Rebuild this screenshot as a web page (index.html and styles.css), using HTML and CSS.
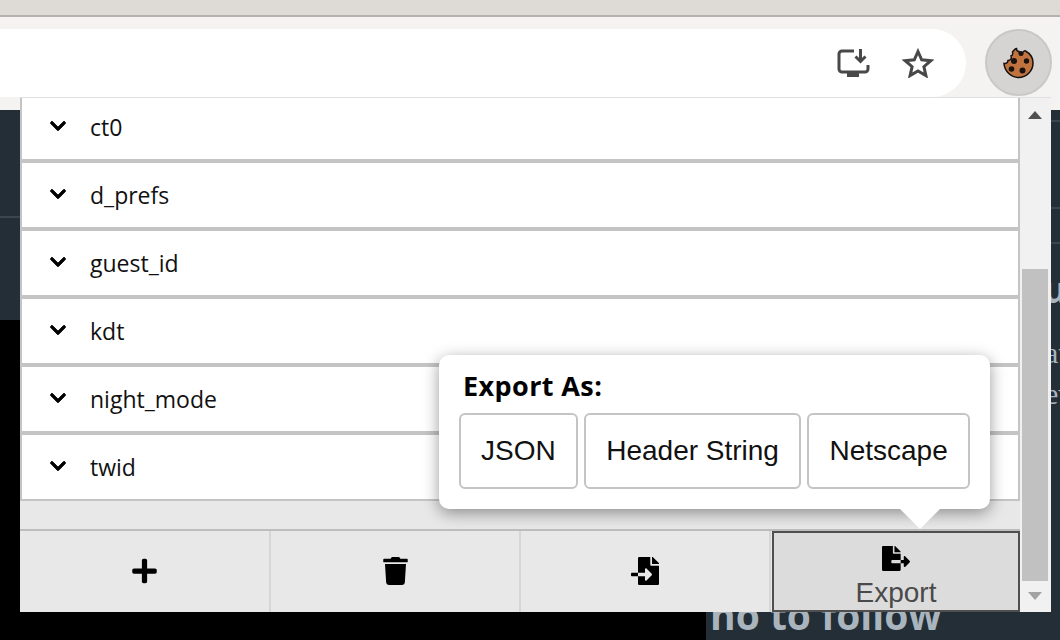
FILE: index.html
```html
<!DOCTYPE html>
<html lang="en">
<head>
    <meta charset="UTF-8">
    <meta name="viewport" content="width=device-width, initial-scale=1.0">
    <title>Cookie Editor</title>
    <link rel="stylesheet" href="styles.css">
</head>
<body>

<div class="tabstrip"></div>

<div class="toolbar">
    <div class="omnibox">
        <svg class="omni-icon" width="34" height="30" viewBox="0 0 34 30">
            <path d="M18 3H6a3 3 0 0 0-3 3v15a3 3 0 0 0 3 3h23a3 3 0 0 0 3-3v-4" fill="none" stroke="#484848" stroke-width="3"/>
            <rect x="11" y="24" width="12" height="5" fill="#484848"/>
            <path d="M24.5 1v11M19.5 8.500l5 5 5-5" fill="none" stroke="#484848" stroke-width="3"/>
        </svg>
        <svg class="omni-icon" width="32" height="30" viewBox="0 0 32 30">
            <path d="M16 3.500l3.700 8.300 9.100.9-6.900 6 2 8.900-7.900-4.700-7.900 4.700 2-8.900-6.900-6 9.100-.9z" fill="none" stroke="#484848" stroke-width="3" stroke-linejoin="miter"/>
        </svg>
    </div>
    <div class="ext-button">
        <svg width="34" height="34" viewBox="1.500 0 34 34">
            <path d="M16 2.500c0 2 1 3 2.500 3 0 2 2 3 3.500 1.500 .5-1.500 2-2.500 3-2 4.500 2.500 7.500 7 7.500 12 0 8-6.500 14.500-14.500 14.500-7 0-14-6-14.500-14 2 .5 4-1 4-3 2.500 0 4-2 3-4.500 1.500-.5 2-2 1.500-4 1.500-1.500 2.500-3.500 4-3.500z" fill="#c1733f" stroke="#111" stroke-width="1.500"/>
            <circle cx="20.500" cy="7.500" r="2.500" fill="#1a1210"/>
            <circle cx="13.500" cy="15" r="3" fill="#1a1210"/>
            <circle cx="26" cy="15" r="2.700" fill="#1a1210"/>
            <circle cx="11" cy="23" r="2.800" fill="#1a1210"/>
            <circle cx="22" cy="24.500" r="3" fill="#1a1210"/>
        </svg>
    </div>
</div>

<div class="page">
    <div class="page-left">
        <div class="left-top"></div>
    </div>
    <div class="page-right">
        <div class="right-line first"></div>
        <div class="right-line second"></div>
        <div class="right-line third"></div>
        <div class="right-big">u</div>
        <div class="right-small">at</div>
        <div class="right-small">ev</div>
        <div class="right-title">no to follow</div>
    </div>
</div>

<div class="popup">
    <div class="popup-main">
        <div class="cookie-list">
            <div class="cookie-row"><svg class="chevron" viewBox="0 0 448 512"><path d="M207.029 381.476L12.686 187.132c-9.373-9.373-9.373-24.569 0-33.941l22.667-22.667c9.357-9.357 24.522-9.375 33.901-.04L224 284.505l154.745-154.021c9.379-9.335 24.544-9.317 33.901.04l22.667 22.667c9.373 9.373 9.373 24.569 0 33.941L240.971 381.476c-9.373 9.372-24.569 9.372-33.942 0z"/></svg><span>ct0</span></div>
            <div class="cookie-row"><svg class="chevron" viewBox="0 0 448 512"><path d="M207.029 381.476L12.686 187.132c-9.373-9.373-9.373-24.569 0-33.941l22.667-22.667c9.357-9.357 24.522-9.375 33.901-.04L224 284.505l154.745-154.021c9.379-9.335 24.544-9.317 33.901.04l22.667 22.667c9.373 9.373 9.373 24.569 0 33.941L240.971 381.476c-9.373 9.372-24.569 9.372-33.942 0z"/></svg><span>d_prefs</span></div>
            <div class="cookie-row"><svg class="chevron" viewBox="0 0 448 512"><path d="M207.029 381.476L12.686 187.132c-9.373-9.373-9.373-24.569 0-33.941l22.667-22.667c9.357-9.357 24.522-9.375 33.901-.04L224 284.505l154.745-154.021c9.379-9.335 24.544-9.317 33.901.04l22.667 22.667c9.373 9.373 9.373 24.569 0 33.941L240.971 381.476c-9.373 9.372-24.569 9.372-33.942 0z"/></svg><span>guest_id</span></div>
            <div class="cookie-row"><svg class="chevron" viewBox="0 0 448 512"><path d="M207.029 381.476L12.686 187.132c-9.373-9.373-9.373-24.569 0-33.941l22.667-22.667c9.357-9.357 24.522-9.375 33.901-.04L224 284.505l154.745-154.021c9.379-9.335 24.544-9.317 33.901.04l22.667 22.667c9.373 9.373 9.373 24.569 0 33.941L240.971 381.476c-9.373 9.372-24.569 9.372-33.942 0z"/></svg><span>kdt</span></div>
            <div class="cookie-row"><svg class="chevron" viewBox="0 0 448 512"><path d="M207.029 381.476L12.686 187.132c-9.373-9.373-9.373-24.569 0-33.941l22.667-22.667c9.357-9.357 24.522-9.375 33.901-.04L224 284.505l154.745-154.021c9.379-9.335 24.544-9.317 33.901.04l22.667 22.667c9.373 9.373 9.373 24.569 0 33.941L240.971 381.476c-9.373 9.372-24.569 9.372-33.942 0z"/></svg><span>night_mode</span></div>
            <div class="cookie-row"><svg class="chevron" viewBox="0 0 448 512"><path d="M207.029 381.476L12.686 187.132c-9.373-9.373-9.373-24.569 0-33.941l22.667-22.667c9.357-9.357 24.522-9.375 33.901-.04L224 284.505l154.745-154.021c9.379-9.335 24.544-9.317 33.901.04l22.667 22.667c9.373 9.373 9.373 24.569 0 33.941L240.971 381.476c-9.373 9.372-24.569 9.372-33.942 0z"/></svg><span>twid</span></div>
        </div>
        <div class="actions">
            <div class="action">
                <svg width="25" height="28" viewBox="0 0 448 512"><path d="M416 208H272V64c0-17.670-14.330-32-32-32h-32c-17.670 0-32 14.330-32 32v144H32c-17.670 0-32 14.330-32 32v32c0 17.670 14.330 32 32 32h144v144c0 17.670 14.330 32 32 32h32c17.670 0 32-14.330 32-32V304h144c17.670 0 32-14.330 32-32v-32c0-17.670-14.330-32-32-32z"/></svg>
            </div>
            <div class="action">
                <svg width="25" height="28" viewBox="0 0 448 512"><path d="M432 32H312l-9.400-18.700A24 24 0 0 0 281.100 0H166.800a23.720 23.720 0 0 0-21.400 13.300L136 32H16A16 16 0 0 0 0 48v32a16 16 0 0 0 16 16h416a16 16 0 0 0 16-16V48a16 16 0 0 0-16-16zM53.200 467a48 48 0 0 0 47.900 45h245.800a48 48 0 0 0 47.900-45L416 128H32z"/></svg>
            </div>
            <div class="action">
                <svg width="28" height="28" viewBox="0 0 512 512"><path d="M16 288c-8.800 0-16 7.200-16 16v32c0 8.800 7.200 16 16 16h112v-64zm489-183L407.100 7c-4.500-4.500-10.600-7-17-7H384v128h128v-6.100c0-6.300-2.500-12.400-7-16.900zm-153 31V0H152c-13.300 0-24 10.700-24 24v264h128v-65.200c0-14.300 17.300-21.400 27.400-11.300L379 308c6.600 6.700 6.600 17.400 0 24l-95.700 96.400c-10.100 10.100-27.400 3-27.400-11.300V352H128v136c0 13.300 10.700 24 24 24h336c13.300 0 24-10.700 24-24V160H376c-13.200 0-24-10.800-24-24z"/></svg>
            </div>
            <div class="action active">
                <svg width="28" height="25" viewBox="0 0 576 512"><path d="M384 121.900c0-6.300-2.500-12.400-7-16.900L279.100 7c-4.500-4.500-10.600-7-17-7H256v128h128zM571 308l-95.700-96.400c-10.100-10.100-27.400-3-27.400 11.300V288h-64v64h64v65.200c0 14.300 17.300 21.400 27.400 11.300L571 332c6.600-6.700 6.600-17.400 0-24zm-379 28v-32c0-8.800 7.200-16 16-16h176V160H248c-13.200 0-24-10.800-24-24V0H24C10.700 0 0 10.700 0 24v464c0 13.300 10.700 24 24 24h336c13.300 0 24-10.700 24-24V352H208c-8.800 0-16-7.200-16-16z"/></svg>
                <span class="action-label">Export</span>
            </div>
        </div>
    </div>
    <div class="scrollbar">
        <div class="arrow-up"></div>
        <div class="thumb"></div>
        <div class="arrow-down"></div>
    </div>
    <div class="export-menu">
        <div class="export-title">Export As:</div>
        <div class="export-options">
            <div class="export-option">JSON</div>
            <div class="export-option">Header String</div>
            <div class="export-option">Netscape</div>
        </div>
    </div>
</div>

</body>
</html>
```

FILE: styles.css
```css
html, body {
    height: 640px;
}

body {
    margin: 0;
    background-color: #000;
    overflow: hidden;
    position: relative;
    font-family: "Open Sans", sans-serif;
}

.tabstrip {
    height: 15px;
    background-color: #dedad6;
    border-bottom: 2px solid #b5b2ae;
}

.toolbar {
    height: 93px;
    display: flex;
    background-color: #f5f3f1;
    padding-top: 12px;
    box-sizing: border-box;
}

.omnibox {
    width: 966px;
    height: 68px;
    background-color: #fff;
    border-radius: 0 34px 34px 0;
    display: flex;
    align-items: center;
    justify-content: flex-end;
    gap: 32px;
    padding-right: 32px;
    box-sizing: border-box;
}

.ext-button {
    width: 67px;
    height: 67px;
    margin-left: 19px;
    border-radius: 50%;
    background-color: #d5d4d3;
    border: 2px solid #c9c8c6;
    box-sizing: border-box;
    display: flex;
    align-items: center;
    justify-content: center;
}

.page {
    display: flex;
    height: 530px;
}

.page-left {
    width: 706px;
    background-color: #000;
}

.left-top {
    height: 210px;
    background-color: #232e37;
    background-image: linear-gradient(#3a454e, #3a454e);
    background-size: 100% 2px;
    background-position: 0 106px;
    background-repeat: no-repeat;
}

.page-right {
    flex: 1;
    background-color: #232e37;
    color: #a9b4bd;
    padding-left: 4px;
    overflow: hidden;
}

.right-line {
    height: 2px;
    background-color: #3a454e;
}

.right-line.first {
    margin-top: 10px;
}

.right-line.second {
    margin-top: 85px;
}

.right-line.third {
    margin-top: 33px;
}

.right-big {
    margin-top: 24px;
    padding-left: 333px;
    font-size: 36px;
    font-weight: bold;
    line-height: 44px;
}

.right-small {
    padding-left: 335px;
    font-family: "Liberation Serif", serif;
    font-size: 30px;
    line-height: 41px;
}

.right-small:nth-of-type(5) {
    margin-top: 20px;
}

.right-title {
    margin-top: 179px;
    font-size: 39px;
    font-weight: bold;
    line-height: 44px;
}

.popup {
    position: absolute;
    left: 20px;
    top: 97px;
    width: 1031px;
    height: 515px;
    display: flex;
    background-color: #e8e8e8;
    border-top: 1px solid #e0e0e0;
    box-sizing: border-box;
}

.popup-main {
    width: 1000px;
    display: flex;
    flex-direction: column;
}

.cookie-list {
    height: 431px;
    flex: none;
    overflow: hidden;
    border-bottom: 2px solid #bdbdbd;
}

.cookie-row {
    height: 68px;
    display: flex;
    align-items: center;
    box-sizing: border-box;
    background-color: #fff;
    border: 2px solid #c4c4c4;
    border-width: 0 2px 4px 2px;
    font-size: 23px;
    color: #111;
}

.cookie-row:first-child {
    margin-top: -3px;
}

.cookie-row:last-child {
    height: 66px;
    border-bottom-width: 2px;
}

.chevron {
    width: 16px;
    height: 18px;
    margin-left: 28px;
    margin-right: 24px;
    margin-top: -2px;
    stroke: #000;
    stroke-width: 22px;
}

.actions {
    flex: 1;
    display: flex;
}

.action {
    width: 250px;
    padding-bottom: 2px;
    display: flex;
    flex-direction: column;
    align-items: center;
    justify-content: center;
    border-right: 2px solid #d6d6d6;
    box-sizing: border-box;
}

.action:first-child {
    width: 251px;
}

.action.active {
    flex: 1;
    margin-left: 1px;
    padding: 13px 0 0;
    justify-content: flex-start;
    background-color: #dcdcdc;
    border: 2px solid #4f4f4f;
}

.action-label {
    margin-top: 6px;
    font-family: "Liberation Sans", sans-serif;
    font-size: 28px;
    line-height: 32px;
    color: #4a4a4a;
}

.scrollbar {
    flex: 1;
    display: flex;
    flex-direction: column;
    align-items: center;
    padding-right: 1px;
    background-color: #f1f1f1;
}

.arrow-up {
    margin-top: 13px;
    border: 7px solid transparent;
    border-top: 0;
    border-bottom: 8px solid #505050;
}

.thumb {
    width: 26px;
    height: 312px;
    margin-top: 150px;
    background-color: #c1c1c1;
}

.arrow-down {
    margin-top: 11px;
    border: 7px solid transparent;
    border-bottom: 0;
    border-top: 8px solid #a3a3a3;
}

.export-menu {
    position: absolute;
    left: 419px;
    top: 257px;
    width: 551px;
    height: 154px;
    padding: 14px 20px 0;
    box-sizing: border-box;
    background-color: #fff;
    border-radius: 10px;
    box-shadow: 0 4px 16px rgba(0, 0, 0, 0.4);
}

.export-menu::after {
    content: "";
    position: absolute;
    left: 461px;
    top: 154px;
    border: 20px solid transparent;
    border-bottom: 0;
    border-top: 20px solid #fff;
}

.export-title {
    padding-left: 4px;
    font-size: 27px;
    font-weight: bold;
    letter-spacing: 0.4px;
    line-height: 34px;
    color: #000;
}

.export-options {
    display: flex;
    gap: 6.5px;
    margin-top: 10px;
}

.export-option {
    height: 76px;
    padding: 0 20px;
    box-sizing: border-box;
    display: flex;
    align-items: center;
    background-color: #fff;
    border: 2px solid #c4c4c4;
    border-radius: 6px;
    font-family: "Liberation Sans", sans-serif;
    font-size: 28px;
    color: #111;
}
```
